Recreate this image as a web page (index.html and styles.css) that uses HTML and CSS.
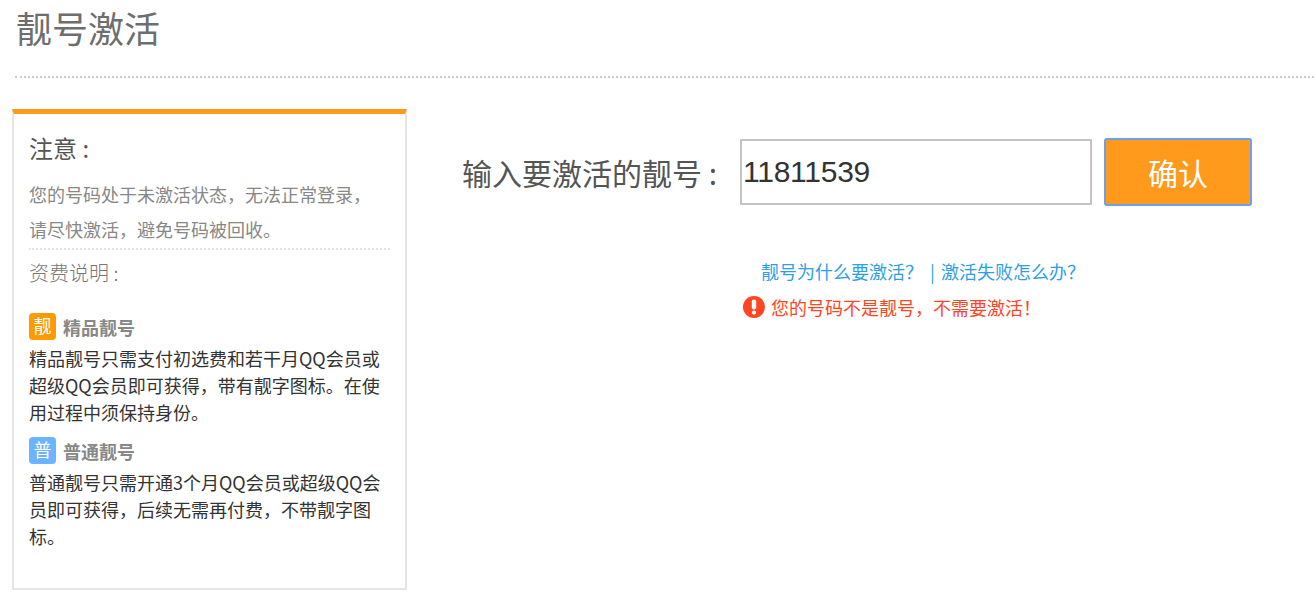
FILE: index.html
```html
<!DOCTYPE html>
<html lang="zh-CN">
<head>
    <meta charset="UTF-8">
    <title>靓号激活</title>
    <link rel="stylesheet" href="styles.css">
</head>
<body>
    <div class="page-title">
        <h1>靓号激活</h1>
    </div>

    <div class="content">
        <div class="notice">
            <h3>注意 :</h3>
            <p class="notice-text">您的号码处于未激活状态，无法正常登录，<br>请尽快激活，避免号码被回收。</p>
            <h4>资费说明 :</h4>

            <div class="type-title">
                <span class="type-icon orange">靓</span>
                <strong>精品靓号</strong>
            </div>
            <p class="type-desc">精品靓号只需支付初选费和若干月QQ会员或超级QQ会员即可获得，带有靓字图标。在使用过程中须保持身份。</p>

            <div class="type-title second">
                <span class="type-icon blue">普</span>
                <strong>普通靓号</strong>
            </div>
            <p class="type-desc">普通靓号只需开通3个月QQ会员或超级QQ会员即可获得，后续无需再付费，不带靓字图标。</p>
        </div>

        <div class="activate">
            <div class="form-row">
                <label for="number">输入要激活的靓号 :</label>
                <input type="text" id="number" value="11811539">
                <button>确认</button>
            </div>
            <div class="links">
                <a href="#">靓号为什么要激活？</a>
                <a href="#" class="sep">| 激活失败怎么办？</a>
            </div>
            <div class="error">
                <span class="error-icon">
                    <svg width="22" height="22" viewBox="0 0 22 22">
                        <circle cx="11" cy="11" r="11" fill="#ff4522"/>
                        <rect x="8.8" y="3.6" width="4.4" height="10" rx="2" fill="#fff"/>
                        <circle cx="11" cy="16.6" r="2.1" fill="#fff"/>
                    </svg>
                </span>
                您的号码不是靓号，不需要激活！
            </div>
        </div>
    </div>
</body>
</html>
```

FILE: styles.css
```css
* {
    box-sizing: border-box;
}

body {
    margin: 0;
    font-family: "Noto Sans CJK SC", "Liberation Sans", sans-serif;
    background-color: #fff;
    color: #333;
    overflow: hidden;
}

.page-title {
    height: 78px;
    margin-left: 15px;
    padding-left: 1px;
    border-bottom: 2px dotted #ccc;
}

.page-title h1 {
    margin: 0;
    font-size: 36px;
    font-weight: 400;
    line-height: 55px;
    color: #6e6e6e;
}

.content {
    display: flex;
    align-items: flex-start;
    padding: 31px 0 0 12px;
}

.notice {
    width: 395px;
    height: 481px;
    padding: 16px 15px 0;
    border: 2px solid #e5e5e5;
    border-top: 5px solid #ff9a1c;
}

.notice h3 {
    margin: 0;
    font-size: 24px;
    font-weight: 400;
    line-height: 36px;
    color: #555;
}

.notice-text {
    margin: 11px 0 0;
    padding-bottom: 1px;
    font-size: 18px;
    line-height: 35px;
    color: #888;
    border-bottom: 2px dotted #e5e5e5;
}

.notice h4 {
    margin: 5px 0 0;
    font-size: 20px;
    font-weight: 300;
    line-height: 36px;
    color: #777;
}

.type-title {
    display: flex;
    align-items: center;
    gap: 7px;
    height: 27px;
    margin-top: 22px;
}

.type-title.second {
    margin-top: 11px;
}

.type-title strong {
    font-size: 18px;
    color: #888;
}

.type-icon {
    width: 27px;
    height: 27px;
    border-radius: 4px;
    color: #fff;
    font-size: 18px;
    line-height: 25px;
    text-align: center;
}

.orange {
    background-color: #ff9a00;
}

.blue {
    background-color: #6cb4ff;
}

.type-desc {
    margin: 5px 0 0;
    font-size: 18px;
    line-height: 27px;
    color: #333;
}

.activate {
    margin-left: 55px;
}

.form-row {
    display: flex;
    align-items: center;
    height: 68px;
    margin-top: 29px;
}

.form-row label {
    width: 278px;
    font-size: 30px;
    color: #555;
}

.form-row input {
    width: 352px;
    height: 66px;
    padding: 0 1px;
    border: 2px solid #c4c4c4;
    border-radius: 0;
    font-family: "Liberation Sans", sans-serif;
    font-size: 30px;
    letter-spacing: -0.25px;
    color: #333;
    outline: none;
}

.form-row button {
    width: 148px;
    height: 68px;
    margin-left: 12px;
    border: 2px solid #6b9ff0;
    border-radius: 3px;
    background-color: #ff9a1c;
    color: #fff;
    font-family: inherit;
    font-size: 30px;
    cursor: pointer;
}

.links {
    margin: 50px 0 0 299px;
    font-size: 18px;
    line-height: 30px;
}

.links a {
    color: #2e9fe6;
    text-decoration: none;
}

.links .sep {
    margin-left: 3px;
    word-spacing: 2px;
}

.error {
    display: flex;
    align-items: center;
    gap: 6px;
    margin: 6px 0 0 281px;
    font-size: 18px;
    line-height: 30px;
    color: #ff4522;
}

.error-icon {
    display: flex;
}
```
